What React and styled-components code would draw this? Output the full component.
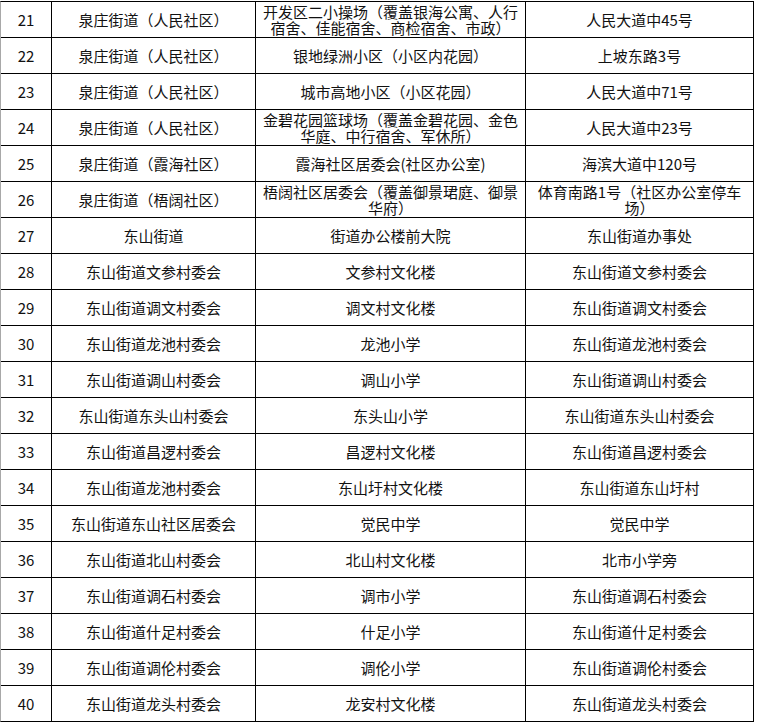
import React from "react";
import styled, { createGlobalStyle } from "styled-components";

const GlobalStyle = createGlobalStyle`
  html, body {
    margin: 0;
    padding: 0;
    background: #fff;
  }
  body {
    font-family: "Noto Sans CJK SC", "Noto Sans", sans-serif;
    color: #111;
  }
`;

const Page = styled.div`
  padding-top: 1px;
  width: 757px;
`;

const Sheet = styled.div`
  display: grid;
  grid-template-columns: 50px 203px 269px 227px;
  grid-auto-rows: 35px;
  gap: 1px;
  width: max-content;
  background: #000;
  border: 1px solid #000;
  border-left-color: #a8a8a8;
`;

const Cell = styled.div`
  background: #fff;
  display: flex;
  align-items: center;
  justify-content: center;
  text-align: center;
  padding: ${(p) => (p.$num ? "1px 0 0" : "1px 6px 0")};
  font-size: 15px;
  line-height: 16.5px;
`;

const rows = [
  [21, "泉庄街道（人民社区）", "开发区二小操场（覆盖银海公寓、人行宿舍、佳能宿舍、商检宿舍、市政）", "人民大道中45号"],
  [22, "泉庄街道（人民社区）", "银地绿洲小区（小区内花园）", "上坡东路3号"],
  [23, "泉庄街道（人民社区）", "城市高地小区（小区花园）", "人民大道中71号"],
  [24, "泉庄街道（人民社区）", "金碧花园篮球场（覆盖金碧花园、金色华庭、中行宿舍、军休所）", "人民大道中23号"],
  [25, "泉庄街道（霞海社区）", "霞海社区居委会(社区办公室)", "海滨大道中120号"],
  [26, "泉庄街道（梧阔社区）", "梧阔社区居委会（覆盖御景珺庭、御景华府）", "体育南路1号（社区办公室停车场）"],
  [27, "东山街道", "街道办公楼前大院", "东山街道办事处"],
  [28, "东山街道文参村委会", "文参村文化楼", "东山街道文参村委会"],
  [29, "东山街道调文村委会", "调文村文化楼", "东山街道调文村委会"],
  [30, "东山街道龙池村委会", "龙池小学", "东山街道龙池村委会"],
  [31, "东山街道调山村委会", "调山小学", "东山街道调山村委会"],
  [32, "东山街道东头山村委会", "东头山小学", "东山街道东头山村委会"],
  [33, "东山街道昌逻村委会", "昌逻村文化楼", "东山街道昌逻村委会"],
  [34, "东山街道龙池村委会", "东山圩村文化楼", "东山街道东山圩村"],
  [35, "东山街道东山社区居委会", "觉民中学", "觉民中学"],
  [36, "东山街道北山村委会", "北山村文化楼", "北市小学旁"],
  [37, "东山街道调石村委会", "调市小学", "东山街道调石村委会"],
  [38, "东山街道什足村委会", "什足小学", "东山街道什足村委会"],
  [39, "东山街道调伦村委会", "调伦小学", "东山街道调伦村委会"],
  [40, "东山街道龙头村委会", "龙安村文化楼", "东山街道龙头村委会"],
];

export default function App() {
  return (
    <Page>
      <GlobalStyle />
      <Sheet>
        {rows.map(([no, street, site, addr]) => (
          <React.Fragment key={no}>
            <Cell $num>{no}</Cell>
            <Cell>{street}</Cell>
            <Cell>{site}</Cell>
            <Cell>{addr}</Cell>
          </React.Fragment>
        ))}
      </Sheet>
    </Page>
  );
}
